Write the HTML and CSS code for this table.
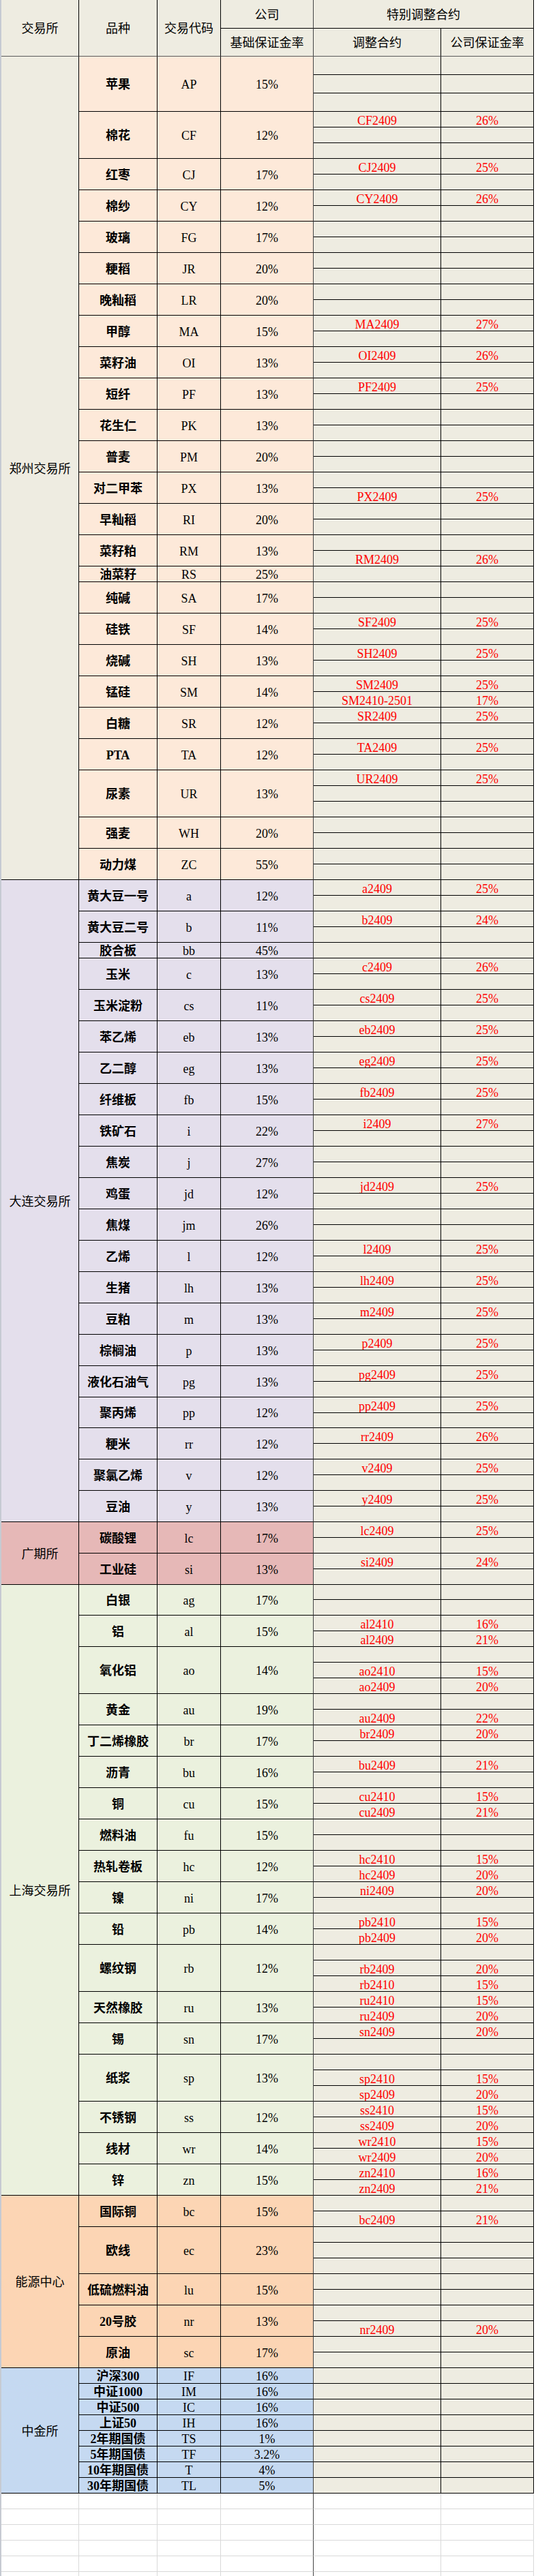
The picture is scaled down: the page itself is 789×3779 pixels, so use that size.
FILE: index.html
```html
<!DOCTYPE html>
<html lang="zh-CN">
<head>
<meta charset="utf-8">
<title>保证金率</title>
<link rel="stylesheet" href="styles.css">
</head>
<body>
<div class="sheet">
  <div class="hd h-ex">交易所</div>
  <div class="hd h-nm">品种</div>
  <div class="hd h-cd">交易代码</div>
  <div class="hd h-co">公司</div>
  <div class="hd h-sp">特别调整合约</div>
  <div class="hd h-rt">基础保证金率</div>
  <div class="hd h-ct">调整合约</div>
  <div class="hd h-pc">公司保证金率</div>

  <div class="sec zz">
    <div class="ex">郑州交易所</div>
    <div class="it i3"><div class="nm">苹果</div><div class="cd">AP</div><div class="rt">15%</div><div class="ct t27"></div><div class="pc t27"></div><div class="ct t27"></div><div class="pc t27"></div><div class="ct t27"></div><div class="pc t27"></div></div>
    <div class="it i3"><div class="nm">棉花</div><div class="cd">CF</div><div class="rt">12%</div><div class="ct">CF2409</div><div class="pc">26%</div><div class="ct"></div><div class="pc"></div><div class="ct"></div><div class="pc"></div></div>
    <div class="it i2"><div class="nm">红枣</div><div class="cd">CJ</div><div class="rt">17%</div><div class="ct">CJ2409</div><div class="pc">25%</div><div class="ct"></div><div class="pc"></div></div>
    <div class="it i2"><div class="nm">棉纱</div><div class="cd">CY</div><div class="rt">12%</div><div class="ct">CY2409</div><div class="pc">26%</div><div class="ct"></div><div class="pc"></div></div>
    <div class="it i2"><div class="nm">玻璃</div><div class="cd">FG</div><div class="rt">17%</div><div class="ct"></div><div class="pc"></div><div class="ct"></div><div class="pc"></div></div>
    <div class="it i2"><div class="nm">粳稻</div><div class="cd">JR</div><div class="rt">20%</div><div class="ct"></div><div class="pc"></div><div class="ct"></div><div class="pc"></div></div>
    <div class="it i2"><div class="nm">晚籼稻</div><div class="cd">LR</div><div class="rt">20%</div><div class="ct"></div><div class="pc"></div><div class="ct"></div><div class="pc"></div></div>
    <div class="it i2"><div class="nm">甲醇</div><div class="cd">MA</div><div class="rt">15%</div><div class="ct">MA2409</div><div class="pc">27%</div><div class="ct"></div><div class="pc"></div></div>
    <div class="it i2"><div class="nm">菜籽油</div><div class="cd">OI</div><div class="rt">13%</div><div class="ct">OI2409</div><div class="pc">26%</div><div class="ct"></div><div class="pc"></div></div>
    <div class="it i2"><div class="nm">短纤</div><div class="cd">PF</div><div class="rt">13%</div><div class="ct">PF2409</div><div class="pc">25%</div><div class="ct"></div><div class="pc"></div></div>
    <div class="it i2"><div class="nm">花生仁</div><div class="cd">PK</div><div class="rt">13%</div><div class="ct"></div><div class="pc"></div><div class="ct"></div><div class="pc"></div></div>
    <div class="it i2"><div class="nm">普麦</div><div class="cd">PM</div><div class="rt">20%</div><div class="ct"></div><div class="pc"></div><div class="ct"></div><div class="pc"></div></div>
    <div class="it i2"><div class="nm">对二甲苯</div><div class="cd">PX</div><div class="rt">13%</div><div class="ct"></div><div class="pc"></div><div class="ct">PX2409</div><div class="pc">25%</div></div>
    <div class="it i2"><div class="nm">早籼稻</div><div class="cd">RI</div><div class="rt">20%</div><div class="ct"></div><div class="pc"></div><div class="ct"></div><div class="pc"></div></div>
    <div class="it i2"><div class="nm">菜籽粕</div><div class="cd">RM</div><div class="rt">13%</div><div class="ct"></div><div class="pc"></div><div class="ct">RM2409</div><div class="pc">26%</div></div>
    <div class="it i1"><div class="nm">油菜籽</div><div class="cd">RS</div><div class="rt">25%</div><div class="ct"></div><div class="pc"></div></div>
    <div class="it i2"><div class="nm">纯碱</div><div class="cd">SA</div><div class="rt">17%</div><div class="ct"></div><div class="pc"></div><div class="ct"></div><div class="pc"></div></div>
    <div class="it i2"><div class="nm">硅铁</div><div class="cd">SF</div><div class="rt">14%</div><div class="ct">SF2409</div><div class="pc">25%</div><div class="ct"></div><div class="pc"></div></div>
    <div class="it i2"><div class="nm">烧碱</div><div class="cd">SH</div><div class="rt">13%</div><div class="ct">SH2409</div><div class="pc">25%</div><div class="ct"></div><div class="pc"></div></div>
    <div class="it i2"><div class="nm">锰硅</div><div class="cd">SM</div><div class="rt">14%</div><div class="ct">SM2409</div><div class="pc">25%</div><div class="ct">SM2410-2501</div><div class="pc">17%</div></div>
    <div class="it i2"><div class="nm">白糖</div><div class="cd">SR</div><div class="rt">12%</div><div class="ct">SR2409</div><div class="pc">25%</div><div class="ct"></div><div class="pc"></div></div>
    <div class="it i2"><div class="nm">PTA</div><div class="cd">TA</div><div class="rt">12%</div><div class="ct">TA2409</div><div class="pc">25%</div><div class="ct"></div><div class="pc"></div></div>
    <div class="it i3"><div class="nm">尿素</div><div class="cd">UR</div><div class="rt">13%</div><div class="ct">UR2409</div><div class="pc">25%</div><div class="ct"></div><div class="pc"></div><div class="ct"></div><div class="pc"></div></div>
    <div class="it i2"><div class="nm">强麦</div><div class="cd">WH</div><div class="rt">20%</div><div class="ct"></div><div class="pc"></div><div class="ct"></div><div class="pc"></div></div>
    <div class="it i2"><div class="nm">动力煤</div><div class="cd">ZC</div><div class="rt">55%</div><div class="ct"></div><div class="pc"></div><div class="ct"></div><div class="pc"></div></div>
  </div>

  <div class="sec dl">
    <div class="ex">大连交易所</div>
    <div class="it i2"><div class="nm">黄大豆一号</div><div class="cd">a</div><div class="rt">12%</div><div class="ct">a2409</div><div class="pc">25%</div><div class="ct"></div><div class="pc"></div></div>
    <div class="it i2"><div class="nm">黄大豆二号</div><div class="cd">b</div><div class="rt">11%</div><div class="ct">b2409</div><div class="pc">24%</div><div class="ct"></div><div class="pc"></div></div>
    <div class="it i1"><div class="nm">胶合板</div><div class="cd">bb</div><div class="rt">45%</div><div class="ct"></div><div class="pc"></div></div>
    <div class="it i2"><div class="nm">玉米</div><div class="cd">c</div><div class="rt">13%</div><div class="ct">c2409</div><div class="pc">26%</div><div class="ct"></div><div class="pc"></div></div>
    <div class="it i2"><div class="nm">玉米淀粉</div><div class="cd">cs</div><div class="rt">11%</div><div class="ct">cs2409</div><div class="pc">25%</div><div class="ct"></div><div class="pc"></div></div>
    <div class="it i2"><div class="nm">苯乙烯</div><div class="cd">eb</div><div class="rt">13%</div><div class="ct">eb2409</div><div class="pc">25%</div><div class="ct"></div><div class="pc"></div></div>
    <div class="it i2"><div class="nm">乙二醇</div><div class="cd">eg</div><div class="rt">13%</div><div class="ct">eg2409</div><div class="pc">25%</div><div class="ct"></div><div class="pc"></div></div>
    <div class="it i2"><div class="nm">纤维板</div><div class="cd">fb</div><div class="rt">15%</div><div class="ct">fb2409</div><div class="pc">25%</div><div class="ct"></div><div class="pc"></div></div>
    <div class="it i2"><div class="nm">铁矿石</div><div class="cd">i</div><div class="rt">22%</div><div class="ct">i2409</div><div class="pc">27%</div><div class="ct"></div><div class="pc"></div></div>
    <div class="it i2"><div class="nm">焦炭</div><div class="cd">j</div><div class="rt">27%</div><div class="ct"></div><div class="pc"></div><div class="ct"></div><div class="pc"></div></div>
    <div class="it i2"><div class="nm">鸡蛋</div><div class="cd">jd</div><div class="rt">12%</div><div class="ct">jd2409</div><div class="pc">25%</div><div class="ct"></div><div class="pc"></div></div>
    <div class="it i2"><div class="nm">焦煤</div><div class="cd">jm</div><div class="rt">26%</div><div class="ct"></div><div class="pc"></div><div class="ct"></div><div class="pc"></div></div>
    <div class="it i2"><div class="nm">乙烯</div><div class="cd">l</div><div class="rt">12%</div><div class="ct">l2409</div><div class="pc">25%</div><div class="ct"></div><div class="pc"></div></div>
    <div class="it i2"><div class="nm">生猪</div><div class="cd">lh</div><div class="rt">13%</div><div class="ct">lh2409</div><div class="pc">25%</div><div class="ct"></div><div class="pc"></div></div>
    <div class="it i2"><div class="nm">豆粕</div><div class="cd">m</div><div class="rt">13%</div><div class="ct">m2409</div><div class="pc">25%</div><div class="ct"></div><div class="pc"></div></div>
    <div class="it i2"><div class="nm">棕榈油</div><div class="cd">p</div><div class="rt">13%</div><div class="ct">p2409</div><div class="pc">25%</div><div class="ct"></div><div class="pc"></div></div>
    <div class="it i2"><div class="nm">液化石油气</div><div class="cd">pg</div><div class="rt">13%</div><div class="ct">pg2409</div><div class="pc">25%</div><div class="ct"></div><div class="pc"></div></div>
    <div class="it i2"><div class="nm">聚丙烯</div><div class="cd">pp</div><div class="rt">12%</div><div class="ct">pp2409</div><div class="pc">25%</div><div class="ct t22"></div><div class="pc t22"></div></div>
    <div class="it i2"><div class="nm">粳米</div><div class="cd">rr</div><div class="rt">12%</div><div class="ct">rr2409</div><div class="pc">26%</div><div class="ct"></div><div class="pc"></div></div>
    <div class="it i2"><div class="nm">聚氯乙烯</div><div class="cd">v</div><div class="rt">12%</div><div class="ct">v2409</div><div class="pc">25%</div><div class="ct"></div><div class="pc"></div></div>
    <div class="it i2"><div class="nm">豆油</div><div class="cd">y</div><div class="rt">13%</div><div class="ct">y2409</div><div class="pc">25%</div><div class="ct"></div><div class="pc"></div></div>
  </div>

  <div class="sec gq">
    <div class="ex">广期所</div>
    <div class="it i2"><div class="nm">碳酸锂</div><div class="cd">lc</div><div class="rt">17%</div><div class="ct">lc2409</div><div class="pc">25%</div><div class="ct"></div><div class="pc"></div></div>
    <div class="it i2"><div class="nm">工业硅</div><div class="cd">si</div><div class="rt">13%</div><div class="ct">si2409</div><div class="pc">24%</div><div class="ct"></div><div class="pc"></div></div>
  </div>

  <div class="sec sh">
    <div class="ex">上海交易所</div>
    <div class="it i2"><div class="nm">白银</div><div class="cd">ag</div><div class="rt">17%</div><div class="ct t22"></div><div class="pc t22"></div><div class="ct"></div><div class="pc"></div></div>
    <div class="it i2"><div class="nm">铝</div><div class="cd">al</div><div class="rt">15%</div><div class="ct">al2410</div><div class="pc">16%</div><div class="ct">al2409</div><div class="pc">21%</div></div>
    <div class="it i3"><div class="nm">氧化铝</div><div class="cd">ao</div><div class="rt">14%</div><div class="ct"></div><div class="pc"></div><div class="ct">ao2410</div><div class="pc">15%</div><div class="ct">ao2409</div><div class="pc">20%</div></div>
    <div class="it i2"><div class="nm">黄金</div><div class="cd">au</div><div class="rt">19%</div><div class="ct"></div><div class="pc"></div><div class="ct">au2409</div><div class="pc">22%</div></div>
    <div class="it i2"><div class="nm">丁二烯橡胶</div><div class="cd">br</div><div class="rt">17%</div><div class="ct">br2409</div><div class="pc">20%</div><div class="ct"></div><div class="pc"></div></div>
    <div class="it i2"><div class="nm">沥青</div><div class="cd">bu</div><div class="rt">16%</div><div class="ct">bu2409</div><div class="pc">21%</div><div class="ct"></div><div class="pc"></div></div>
    <div class="it i2"><div class="nm">铜</div><div class="cd">cu</div><div class="rt">15%</div><div class="ct">cu2410</div><div class="pc">15%</div><div class="ct">cu2409</div><div class="pc">21%</div></div>
    <div class="it i2"><div class="nm">燃料油</div><div class="cd">fu</div><div class="rt">15%</div><div class="ct"></div><div class="pc"></div><div class="ct"></div><div class="pc"></div></div>
    <div class="it i2"><div class="nm">热轧卷板</div><div class="cd">hc</div><div class="rt">12%</div><div class="ct">hc2410</div><div class="pc">15%</div><div class="ct">hc2409</div><div class="pc">20%</div></div>
    <div class="it i2"><div class="nm">镍</div><div class="cd">ni</div><div class="rt">17%</div><div class="ct">ni2409</div><div class="pc">20%</div><div class="ct"></div><div class="pc"></div></div>
    <div class="it i2"><div class="nm">铅</div><div class="cd">pb</div><div class="rt">14%</div><div class="ct">pb2410</div><div class="pc">15%</div><div class="ct">pb2409</div><div class="pc">20%</div></div>
    <div class="it i3"><div class="nm">螺纹钢</div><div class="cd">rb</div><div class="rt">12%</div><div class="ct"></div><div class="pc"></div><div class="ct">rb2409</div><div class="pc">20%</div><div class="ct">rb2410</div><div class="pc">15%</div></div>
    <div class="it i2"><div class="nm">天然橡胶</div><div class="cd">ru</div><div class="rt">13%</div><div class="ct">ru2410</div><div class="pc">15%</div><div class="ct">ru2409</div><div class="pc">20%</div></div>
    <div class="it i2"><div class="nm">锡</div><div class="cd">sn</div><div class="rt">17%</div><div class="ct">sn2409</div><div class="pc">20%</div><div class="ct"></div><div class="pc"></div></div>
    <div class="it i3"><div class="nm">纸浆</div><div class="cd">sp</div><div class="rt">13%</div><div class="ct"></div><div class="pc"></div><div class="ct">sp2410</div><div class="pc">15%</div><div class="ct">sp2409</div><div class="pc">20%</div></div>
    <div class="it i2"><div class="nm">不锈钢</div><div class="cd">ss</div><div class="rt">12%</div><div class="ct">ss2410</div><div class="pc">15%</div><div class="ct">ss2409</div><div class="pc">20%</div></div>
    <div class="it i2"><div class="nm">线材</div><div class="cd">wr</div><div class="rt">14%</div><div class="ct">wr2410</div><div class="pc">15%</div><div class="ct">wr2409</div><div class="pc">20%</div></div>
    <div class="it i2"><div class="nm">锌</div><div class="cd">zn</div><div class="rt">15%</div><div class="ct">zn2410</div><div class="pc">16%</div><div class="ct">zn2409</div><div class="pc">21%</div></div>
  </div>

  <div class="sec ny">
    <div class="ex">能源中心</div>
    <div class="it i2"><div class="nm">国际铜</div><div class="cd">bc</div><div class="rt">15%</div><div class="ct"></div><div class="pc"></div><div class="ct">bc2409</div><div class="pc">21%</div></div>
    <div class="it i3"><div class="nm">欧线</div><div class="cd">ec</div><div class="rt">23%</div><div class="ct"></div><div class="pc"></div><div class="ct"></div><div class="pc"></div><div class="ct"></div><div class="pc"></div></div>
    <div class="it i2"><div class="nm">低硫燃料油</div><div class="cd">lu</div><div class="rt">15%</div><div class="ct"></div><div class="pc"></div><div class="ct"></div><div class="pc"></div></div>
    <div class="it i2"><div class="nm">20号胶</div><div class="cd">nr</div><div class="rt">13%</div><div class="ct"></div><div class="pc"></div><div class="ct">nr2409</div><div class="pc">20%</div></div>
    <div class="it i2"><div class="nm">原油</div><div class="cd">sc</div><div class="rt">17%</div><div class="ct"></div><div class="pc"></div><div class="ct"></div><div class="pc"></div></div>
  </div>

  <div class="sec zj">
    <div class="ex">中金所</div>
    <div class="it i1"><div class="nm">沪深300</div><div class="cd">IF</div><div class="rt">16%</div><div class="ct"></div><div class="pc"></div></div>
    <div class="it i1"><div class="nm">中证1000</div><div class="cd">IM</div><div class="rt">16%</div><div class="ct"></div><div class="pc"></div></div>
    <div class="it i1"><div class="nm">中证500</div><div class="cd">IC</div><div class="rt">16%</div><div class="ct"></div><div class="pc"></div></div>
    <div class="it i1"><div class="nm">上证50</div><div class="cd">IH</div><div class="rt">16%</div><div class="ct"></div><div class="pc"></div></div>
    <div class="it i1"><div class="nm">2年期国债</div><div class="cd">TS</div><div class="rt">1%</div><div class="ct"></div><div class="pc"></div></div>
    <div class="it i1"><div class="nm">5年期国债</div><div class="cd">TF</div><div class="rt">3.2%</div><div class="ct"></div><div class="pc"></div></div>
    <div class="it i1"><div class="nm">10年期国债</div><div class="cd">T</div><div class="rt">4%</div><div class="ct"></div><div class="pc"></div></div>
    <div class="it i1"><div class="nm">30年期国债</div><div class="cd">TL</div><div class="rt">5%</div><div class="ct"></div><div class="pc"></div></div>
  </div>

  <div class="frow"><div></div><div></div><div></div><div></div><div></div><div></div></div>
  <div class="frow"><div></div><div></div><div></div><div></div><div></div><div></div></div>
  <div class="frow"><div></div><div></div><div></div><div></div><div></div><div></div></div>
  <div class="frow"><div></div><div></div><div></div><div></div><div></div><div></div></div>
  <div class="frow"><div></div><div></div><div></div><div></div><div></div><div></div></div>
  <div class="frow last"><div></div><div></div><div></div><div></div><div></div><div></div></div>
</div>
</body>
</html>
```

FILE: styles.css
```css
html, body {
  margin: 0;
  padding: 0;
  background: #ffffff;
}

body {
  width: 789px;
}

.sheet {
  display: grid;
  grid-template-columns: 114px 115px 93px 136px 187px 136px;
  width: 781px;
  border-left: 2px solid #c6cad2;
  font-family: "Liberation Serif", "Noto Sans CJK SC", serif;
  font-size: 18px;
  color: #000;
}

.sec,
.it,
.frow {
  display: contents;
}

.hd,
.ex,
.nm,
.cd,
.rt,
.ct,
.pc {
  box-sizing: border-box;
  border-right: 1px solid #000;
  border-bottom: 1px solid #000;
  display: flex;
  align-items: center;
  justify-content: center;
  padding-top: 2px;
  white-space: nowrap;
  line-height: 1;
  overflow: hidden;
}

/* header */
.hd {
  background: #eeece1;
  font-weight: 400;
}
.h-ex { grid-column: 1; grid-row: span 2; border-bottom-color: #5a5a5a; }
.h-nm { grid-column: 2; grid-row: span 2; border-bottom-color: #5a5a5a; }
.h-cd { grid-column: 3; grid-row: span 2; border-bottom-color: #5a5a5a; }
.h-co { grid-column: 4; height: 42px; border-right-color: #444; }
.h-sp { grid-column: 5 / span 2; height: 42px; }
.h-rt { grid-column: 4; height: 41px; border-bottom-color: #5a5a5a; border-right-color: #444; }
.h-ct { grid-column: 5; height: 41px; border-bottom-color: #5a5a5a; }
.h-pc { grid-column: 6; height: 41px; border-bottom-color: #5a5a5a; }

/* body columns */
.ex { grid-column: 1; }
.nm { grid-column: 2; font-weight: 700; }
.cd { grid-column: 3; }
.rt { grid-column: 4; border-right-color: #444; }
.ct { grid-column: 5; }
.pc { grid-column: 6; }

.ct,
.pc {
  height: 23px;
  padding-top: 3px;
  background: #eeece1;
  color: #ff0000;
}
.ct.t27,
.pc.t27 { height: 27px; }
.ct.t22,
.pc.t22 { height: 22px; }

.i2 > .nm, .i2 > .cd, .i2 > .rt { grid-row: span 2; }
.i3 > .nm, .i3 > .cd, .i3 > .rt { grid-row: span 3; }

/* sections */
.zz > .ex { grid-row: span 52; background: #eeece1; }
.zz .nm, .zz .cd, .zz .rt { background: #fde9d9; }

.dl > .ex { grid-row: span 41; background: #e4dfec; }
.dl .nm, .dl .cd, .dl .rt { background: #e4dfec; }

.gq > .ex { grid-row: span 4; background: #e6b8b7; }
.gq .nm, .gq .cd, .gq .rt { background: #e6b8b7; }

.sh > .ex { grid-row: span 39; background: #ebf1de; }
.sh .nm, .sh .cd, .sh .rt { background: #ebf1de; }

.ny > .ex { grid-row: span 11; background: #fcd5b4; }
.ny .nm, .ny .cd, .ny .rt { background: #fcd5b4; }

.zj > .ex { grid-row: span 8; background: #c5d9f1; }
.zj .nm, .zj .cd, .zj .rt { background: #c5d9f1; }

/* empty spreadsheet rows under the table */
.frow > div {
  box-sizing: border-box;
  height: 23px;
  background: #ffffff;
  border-right: 1px solid #d9d9d9;
  border-bottom: 1px solid #d9d9d9;
}
.frow > div:nth-child(4) {
  border-right-color: #444;
}
.frow.last > div {
  height: 6px;
  border-bottom: 0;
}
```
